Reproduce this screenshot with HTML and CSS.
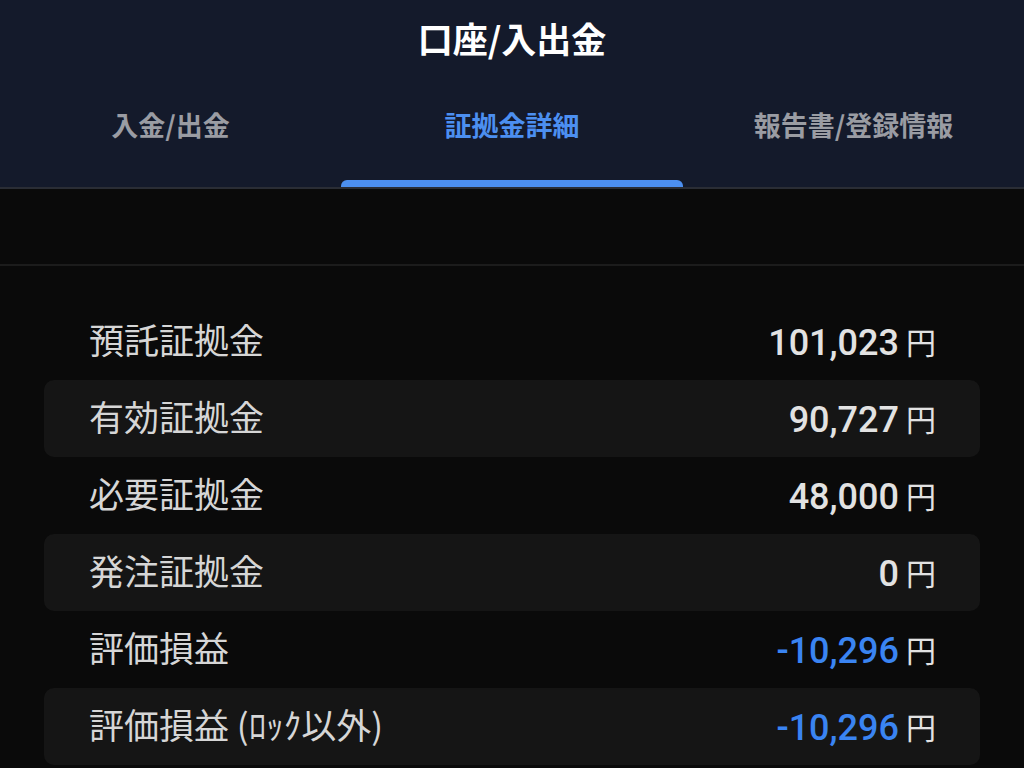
FILE: index.html
```html
<!DOCTYPE html>
<html lang="ja">
<head>
    <meta charset="UTF-8">
    <meta name="viewport" content="width=device-width, initial-scale=1.0">
    <title>口座/入出金</title>
    <link rel="stylesheet" href="styles.css">
</head>
<body>
    <header class="app-header">
        <h1 class="app-title">口座/入出金</h1>
        <nav class="tabs">
            <div class="tab">入金/出金</div>
            <div class="tab active">証拠金詳細</div>
            <div class="tab">報告書/登録情報</div>
        </nav>
    </header>

    <div class="sub-bar"></div>

    <main class="margin-list">
        <div class="margin-row">
            <span class="label">預託証拠金</span>
            <span class="value"><span class="num">101,023</span><span class="yen">円</span></span>
        </div>
        <div class="margin-row striped">
            <span class="label">有効証拠金</span>
            <span class="value"><span class="num">90,727</span><span class="yen">円</span></span>
        </div>
        <div class="margin-row">
            <span class="label">必要証拠金</span>
            <span class="value"><span class="num">48,000</span><span class="yen">円</span></span>
        </div>
        <div class="margin-row striped">
            <span class="label">発注証拠金</span>
            <span class="value"><span class="num">0</span><span class="yen">円</span></span>
        </div>
        <div class="margin-row">
            <span class="label">評価損益</span>
            <span class="value"><span class="num negative">-10,296</span><span class="yen">円</span></span>
        </div>
        <div class="margin-row striped">
            <span class="label">評価損益 (ﾛｯｸ以外)</span>
            <span class="value"><span class="num negative">-10,296</span><span class="yen">円</span></span>
        </div>
    </main>
</body>
</html>
```

FILE: styles.css
```css
:root {
    --header-bg: #141a2b;
    --page-bg: #0a0a0a;
    --row-bg: #151515;
    --text-color: #d6d6d6;
    --tab-color: #9a9ca3;
    --accent-color: #4c8ff0;
    --negative-color: #3a84f2;
}

* {
    box-sizing: border-box;
}

body {
    margin: 0;
    width: 1024px;
    height: 768px;
    overflow: hidden;
    background-color: var(--page-bg);
    color: var(--text-color);
    font-family: Roboto, "Noto Sans CJK JP", sans-serif;
}

.app-header {
    background-color: var(--header-bg);
    border-bottom: 2px solid #2a2d35;
}

.app-title {
    margin: 0;
    height: 78px;
    padding-bottom: 4px;
    display: flex;
    align-items: center;
    justify-content: center;
    font-family: "Noto Sans CJK JP", sans-serif;
    font-size: 35px;
    font-weight: 700;
    color: #ffffff;
}

.tabs {
    display: grid;
    grid-template-columns: 341px 342px 341px;
    height: 109px;
}

.tab {
    position: relative;
    display: flex;
    align-items: center;
    justify-content: center;
    padding-bottom: 16px;
    font-family: "Noto Sans CJK JP", sans-serif;
    font-size: 27px;
    font-weight: 700;
    color: var(--tab-color);
}

.tab.active {
    color: var(--accent-color);
}

.tab.active::after {
    content: "";
    position: absolute;
    left: 0;
    right: 0;
    bottom: 0;
    height: 7px;
    background-color: var(--accent-color);
    border-radius: 6px 6px 0 0;
}

.sub-bar {
    height: 77px;
    border-bottom: 2px solid #1c1c1c;
}

.margin-list {
    display: flex;
    flex-direction: column;
    padding: 37px 44px 0;
}

.margin-row {
    display: flex;
    align-items: center;
    justify-content: space-between;
    height: 77px;
    padding: 0 44px 0 45px;
    border-radius: 10px;
}

.margin-row.striped {
    background-color: var(--row-bg);
}

.label {
    font-family: "Noto Sans CJK JP", sans-serif;
    font-size: 35px;
    color: var(--text-color);
    padding-bottom: 6px;
}

.value {
    display: flex;
    align-items: center;
    gap: 7px;
    padding-top: 2px;
}

.num {
    font-family: Roboto, sans-serif;
    font-size: 36px;
    font-weight: 500;
    color: #e2e2e2;
}

.num.negative {
    color: var(--negative-color);
}

.yen {
    font-family: "Noto Sans CJK JP", sans-serif;
    font-size: 30px;
    color: #e2e2e2;
    padding-bottom: 4px;
}
```
